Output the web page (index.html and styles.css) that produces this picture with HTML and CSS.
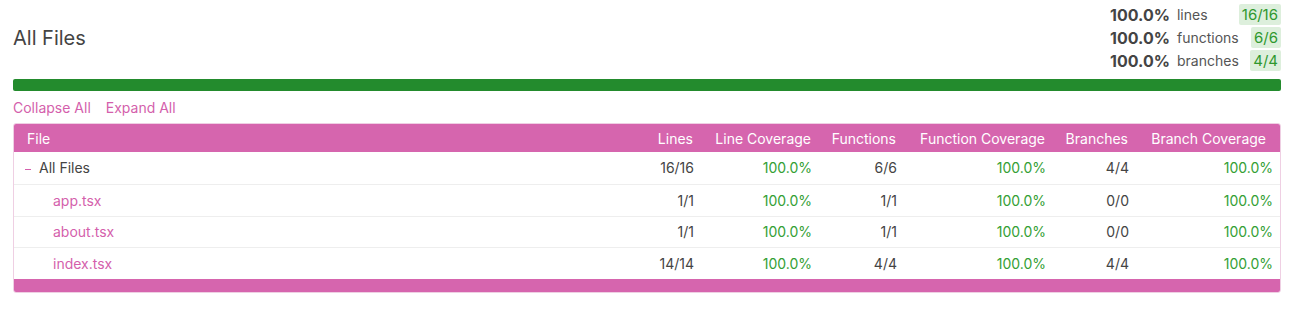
FILE: index.html
```html
<!DOCTYPE html>
<html>
<head>
<meta charset="utf-8">
<link rel="stylesheet" href="styles.css">
</head>
<body>
<div class="page">
  <div class="top">
    <h1 class="title">All Files</h1>
    <div class="summary">
      <span class="pct">100.0%</span><span class="lbl">lines</span><span class="badge">16/16</span>
      <span class="pct">100.0%</span><span class="lbl">functions</span><span class="badge">6/6</span>
      <span class="pct">100.0%</span><span class="lbl">branches</span><span class="badge">4/4</span>
    </div>
  </div>
  <div class="bar"></div>
  <div class="links"><a class="link">Collapse All</a><a class="link">Expand All</a></div>
  <div class="tablewrap">
    <table class="cov">
      <colgroup>
        <col class="c-file"><col class="c-lines"><col class="c-lcov"><col class="c-fn"><col class="c-fcov"><col class="c-br"><col class="c-bcov">
      </colgroup>
      <thead>
        <tr><th class="left">File</th><th>Lines</th><th>Line Coverage</th><th>Functions</th><th>Function Coverage</th><th>Branches</th><th class="last">Branch Coverage</th></tr>
      </thead>
      <tbody>
        <tr><td class="left"><span class="toggle" aria-label="collapse"></span><span class="dir">All Files</span></td><td>16/16</td><td class="ok">100.0%</td><td>6/6</td><td class="ok">100.0%</td><td>4/4</td><td class="ok">100.0%</td></tr>
        <tr><td class="left"><span class="file">app.tsx</span></td><td>1/1</td><td class="ok">100.0%</td><td>1/1</td><td class="ok">100.0%</td><td>0/0</td><td class="ok">100.0%</td></tr>
        <tr class="short"><td class="left"><span class="file">about.tsx</span></td><td>1/1</td><td class="ok">100.0%</td><td>1/1</td><td class="ok">100.0%</td><td>0/0</td><td class="ok">100.0%</td></tr>
        <tr><td class="left"><span class="file">index.tsx</span></td><td>14/14</td><td class="ok">100.0%</td><td>4/4</td><td class="ok">100.0%</td><td>4/4</td><td class="ok">100.0%</td></tr>
      </tbody>
    </table>
    <div class="tfoot"></div>
  </div>
</div>
</body>
</html>
```
FILE: styles.css
```css
* { box-sizing: border-box; }
body {
  margin: 0;
  font-family: Inter, "Noto Sans", sans-serif;
  color: #444;
  background: #fff;
}
.page { padding: 4px 13px 0 13px; }
.top {
  display: flex;
  justify-content: space-between;
  align-items: center;
}
.title {
  margin: 0;
  font-size: 20px;
  font-weight: 400;
  color: #444;
}
.summary {
  display: grid;
  grid-template-columns: auto auto auto;
  align-items: center;
  row-gap: 2px;
}
.pct { font-weight: 700; font-size: 16px; color: #444; }
.lbl { font-size: 14px; padding-left: 7px; padding-right: 0; color: #555; }
.badge {
  justify-self: end;
  background: #ddefdc;
  color: #2f982f;
  font-size: 15px;
  padding: 1px 3px;
  height: 21px;
  line-height: 19px;
  border-radius: 2px;
}
.bar {
  margin-top: 8px;
  height: 12px;
  background: #238b2d;
  border-radius: 2px;
}
.links {
  display: flex;
  gap: 15px;
  padding-top: 8px;
  height: 32px;
  font-size: 14px;
}
.link { color: #d45fac; }
.tablewrap {
  border: 1px solid #efcfe3;
  border-radius: 3px;
  overflow: hidden;
}
.cov {
  width: 100%;
  border-collapse: collapse;
  table-layout: fixed;
  font-size: 14px;
}
.c-lines { width: 81px; }
.c-lcov { width: 118px; }
.c-fn { width: 85px; }
.c-fcov { width: 149px; }
.c-br { width: 83px; }
.c-bcov { width: 144px; }
.cov th {
  background: #d665ae;
  color: #fff;
  font-weight: 400;
  height: 28px;
  text-align: right;
  padding: 0 8px;
}
.cov th.left { text-align: left; padding-left: 13px; }
.cov th.last { padding-right: 14px; }
.cov td {
  height: 32px;
  text-align: right;
  padding: 0 7px 0 8px;
  border-bottom: 1px solid #eeeeee;
  color: #444;
}
.cov tr.short td { height: 31px; }
.cov tbody tr:last-child td { border-bottom: none; }
.cov td.left { text-align: left; padding-left: 11px; }
.cov td.ok { color: #34a034; }
.toggle {
  display: inline-block;
  width: 6px;
  height: 1px;
  background: #d45fac;
  vertical-align: middle;
  margin-right: 8px;
}
.dir { color: #444; }
.file { color: #d45fac; padding-left: 28px; }
.tfoot { height: 13px; background: #d665ae; }
```
